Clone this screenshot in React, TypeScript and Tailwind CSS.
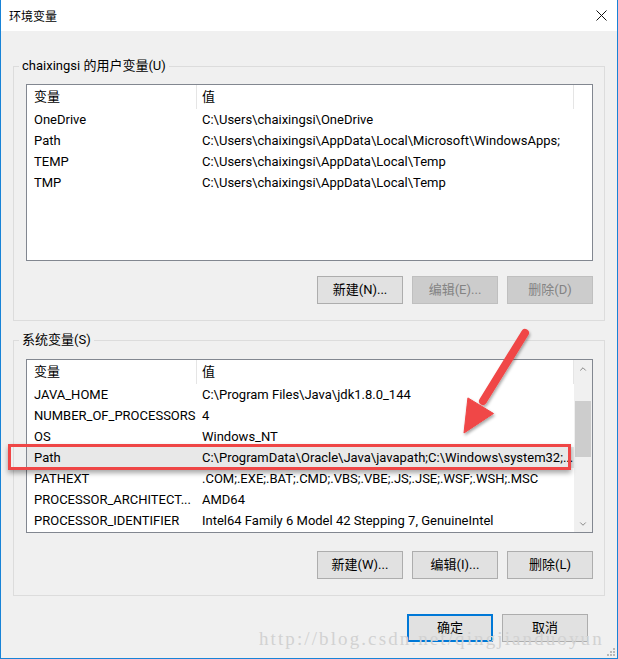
import { ChevronUp, ChevronDown } from "lucide-react";

const font = "font-['Roboto','Noto_Sans_CJK_SC',sans-serif]";

const userVars = [
  { name: "OneDrive", value: "C:\\Users\\chaixingsi\\OneDrive" },
  { name: "Path", value: "C:\\Users\\chaixingsi\\AppData\\Local\\Microsoft\\WindowsApps;" },
  { name: "TEMP", value: "C:\\Users\\chaixingsi\\AppData\\Local\\Temp" },
  { name: "TMP", value: "C:\\Users\\chaixingsi\\AppData\\Local\\Temp" },
];

const sysVars = [
  { name: "JAVA_HOME", value: "C:\\Program Files\\Java\\jdk1.8.0_144" },
  { name: "NUMBER_OF_PROCESSORS", value: "4" },
  { name: "OS", value: "Windows_NT" },
  { name: "Path", value: "C:\\ProgramData\\Oracle\\Java\\javapath;C:\\Windows\\system32;...", hl: true },
  { name: "PATHEXT", value: ".COM;.EXE;.BAT;.CMD;.VBS;.VBE;.JS;.JSE;.WSF;.WSH;.MSC" },
  { name: "PROCESSOR_ARCHITECT...", value: "AMD64" },
  { name: "PROCESSOR_IDENTIFIER", value: "Intel64 Family 6 Model 42 Stepping 7, GenuineIntel" },
];

type Row = { name: string; value: string; hl?: boolean };

function Button({ label, disabled, primary }: { label: string; disabled?: boolean; primary?: boolean }) {
  return (
    <div
      className={
        "w-[86px] h-[28px] flex items-center justify-center text-[13px] " +
        (primary
          ? "border-2 border-[#0078d7] bg-[#e1e1e1] text-black"
          : disabled
          ? "border border-[#bfbfbf] bg-[#cccccc] text-[#838383]"
          : "border border-[#adadad] bg-[#e1e1e1] text-black")
      }
    >
      {label}
    </div>
  );
}

function VarList({ rows, height, scroll }: { rows: Row[]; height: string; scroll?: boolean }) {
  return (
    <div className={"ml-[12px] mr-[11px] border border-[#828790] bg-white flex " + height}>
      <div className="flex-1 flex flex-col min-w-0">
        <div className="h-[24px] flex shrink-0">
          <div className="w-[170px] pl-[7px] border-r border-[#e5e5e5] flex items-center">变量</div>
          <div className="flex-1 pl-[5px] border-r border-[#e5e5e5] flex items-center">值</div>
        </div>
        {rows.map((r) => (
          <div key={r.name} className={"h-[21px] flex items-center shrink-0 " + (r.hl ? "bg-[#e8e8e8]" : "")}>
            <div className="w-[170px] pl-[7px] whitespace-nowrap overflow-hidden">{r.name}</div>
            <div className="flex-1 pl-[5px] whitespace-nowrap overflow-hidden">{r.value}</div>
          </div>
        ))}
      </div>
      <div className={"w-[18px] flex flex-col " + (scroll ? "bg-[#f0f0f0]" : "")}>
        {scroll && (
          <>
            <div className="h-[17px] flex items-center justify-center text-[#606060]">
              <ChevronUp size={10} strokeWidth={1.75} />
            </div>
            <div className="flex-1">
              <div className="mt-[24px] mx-[1px] h-[56px] bg-[#cdcdcd]" />
            </div>
            <div className="h-[17px] flex items-center justify-center text-[#606060]">
              <ChevronDown size={10} strokeWidth={1.75} />
            </div>
          </>
        )}
      </div>
    </div>
  );
}

function Group({ label, children, className }: { label: string; children: React.ReactNode; className: string }) {
  return (
    <div className={"border border-[#dcdcdc] flex flex-col pb-[16px] " + className}>
      <div className="self-start ml-[5px] -mt-[9px] px-[3px] bg-[#f0f0f0] leading-[16px]">{label}</div>
      {children}
    </div>
  );
}

export default function App() {
  return (
    <div className={"relative w-[618px] h-[659px] bg-[#f0f0f0] border-x border-b border-[#1883d7] flex flex-col overflow-hidden text-[13px] text-black " + font}>
      {/* title bar */}
      <div className="h-[31px] bg-white flex items-center justify-between pl-[8px] pr-[10px] shrink-0">
        <span className="text-[12px] font-['Noto_Sans_CJK_SC',sans-serif]">环境变量</span>
        <svg width="11" height="11" viewBox="0 0 11 11">
          <path d="M0.5 0.5 L10.5 10.5 M10.5 0.5 L0.5 10.5" stroke="#111" strokeWidth="1" />
        </svg>
      </div>

      <div className="px-[12px] flex flex-col">
        <Group label="chaixingsi 的用户变量(U)" className="mt-[35px]">
          <div className="mt-[10px]">
            <VarList rows={userVars} height="h-[177px]" />
          </div>
          <div className="mt-[15px] mr-[11px] flex justify-end gap-[9px]">
            <Button label="新建(N)..." />
            <Button label="编辑(E)..." disabled />
            <Button label="删除(D)" disabled />
          </div>
        </Group>

        <Group label="系统变量(S)" className="mt-[19px]">
          <div className="mt-[11px]">
            <VarList rows={sysVars} height="h-[174px]" scroll />
          </div>
          <div className="mt-[18px] mr-[11px] flex justify-end gap-[9px]">
            <Button label="新建(W)..." />
            <Button label="编辑(I)..." />
            <Button label="删除(L)" />
          </div>
        </Group>

        <div className="mt-[18px] mr-[17px] flex justify-end gap-[9px]">
          <Button label="确定" primary />
          <Button label="取消" />
        </div>
      </div>

      {/* annotation: red box around Path */}
      <div className="absolute left-[7px] top-[444px] w-[563px] h-[26px] border-[3px] border-[#ef4646] shadow-[0_3px_5px_rgba(0,0,0,0.35)]" />

      {/* annotation: red arrow */}
      <svg className="absolute left-[449px] top-[320px]" width="92" height="125" viewBox="0 0 92 125">
        <defs>
          <filter id="sh" x="-30%" y="-30%" width="160%" height="160%">
            <feDropShadow dx="1" dy="2" stdDeviation="1.5" floodColor="#000" floodOpacity="0.35" />
          </filter>
        </defs>
        <g filter="url(#sh)" fill="#f04646" stroke="#f04646">
          <line x1="75" y1="13" x2="33" y2="81" strokeWidth="8" strokeLinecap="round" />
          <polygon points="14,113 43.5,93.5 17.9,77.9" strokeWidth="1" strokeLinejoin="round" />
        </g>
      </svg>

      {/* watermark */}
      <div className="absolute left-[258px] top-[628px] text-[19px] leading-[22px] tracking-[2.1px] text-[#d2d2d2] font-['Liberation_Serif',serif] whitespace-nowrap">
        http://blog.csdn.net/qingjianduoyun
      </div>

      {/* resize grip */}
      <svg className="absolute right-[2px] bottom-[2px]" width="10" height="10" viewBox="0 0 10 10">
        {[
          [8, 0], [8, 3], [5, 3], [8, 6], [5, 6], [2, 6],
        ].map(([x, y], i) => (
          <rect key={i} x={x} y={y + 2} width="2" height="2" fill="#b8b8b8" />
        ))}
      </svg>
    </div>
  );
}
